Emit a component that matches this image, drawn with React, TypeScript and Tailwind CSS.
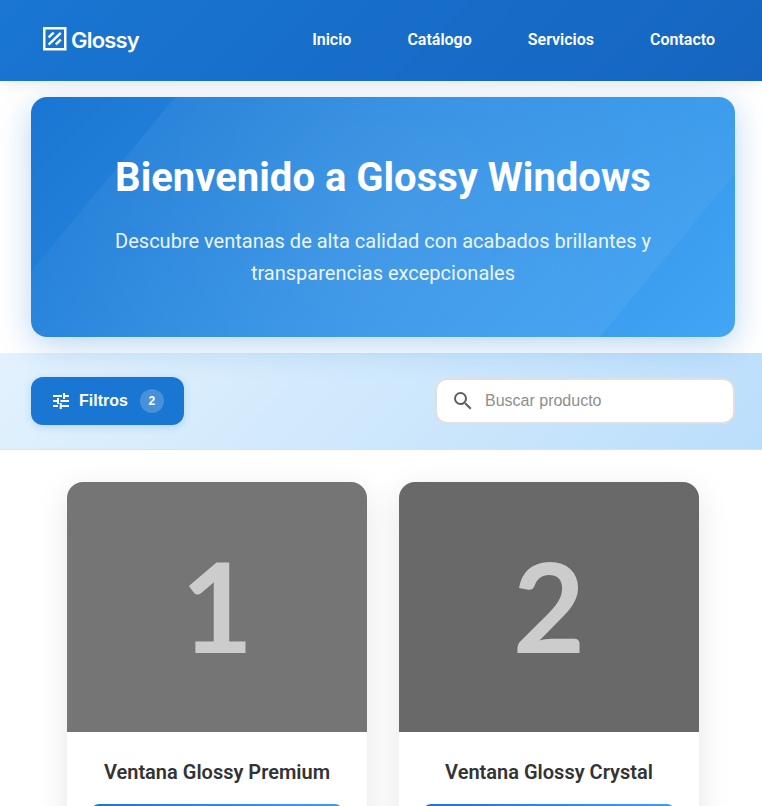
import { MdSearch } from "react-icons/md";

const links = ["Inicio", "Catálogo", "Servicios", "Contacto"];

const products = [
  { id: 1, name: "Ventana Glossy Premium", shade: "bg-[#757575]" },
  { id: 2, name: "Ventana Glossy Crystal", shade: "bg-[#696969]" },
];

function Logo() {
  return (
    <a className="flex items-center pb-[3px] text-white">
      <svg width="24" height="24" viewBox="0 0 24 24" fill="none" stroke="currentColor">
        <rect x="1.25" y="1.25" width="21" height="21" strokeWidth="2.5" />
        <path d="M5.6 10.4 10.7 5.6M5.6 17.6 17.8 5.8M12.8 17.4 17.8 12.6" strokeWidth="2.4" />
      </svg>
      <span className="ml-1 pt-[2px] font-['Inter',sans-serif] text-[22px] font-semibold leading-6 tracking-[-0.8px]">Glossy</span>
    </a>
  );
}

function TuneIcon() {
  return (
    <svg width="20" height="20" viewBox="0 0 20 20" fill="currentColor">
      <path d="M2 4h9v2H2zM12 2h2v2h4v2h-4v2h-2zM2 9h4V7h2v6H6v-2H2zM9.5 9H18v2H9.500zM2 14h5v2H2zM8.700 12h2v2H18v2h-7.300v2h-2z" />
    </svg>
  );
}

export default function App() {
  return (
    <div className="h-[806px] overflow-hidden bg-white font-['Roboto',sans-serif] text-[#333]">
      <header className="relative z-10 flex h-[81px] items-center justify-between bg-linear-[135deg,#1976d2,#1565c0] pr-[47px] pl-[43px] shadow-[0_2px_12px_rgba(0,0,0,0.1)]">
        <Logo />
        <nav className="flex gap-14 pb-[2px] text-base font-semibold text-white">
          {links.map((l) => (
            <a key={l}>{l}</a>
          ))}
        </nav>
      </header>

      <section className="relative mt-4 mr-[27px] mb-4 ml-[31px] h-60 overflow-hidden rounded-2xl bg-linear-[135deg,#1976d2,#42a5f5] px-12 pt-[57px] text-center text-white shadow-[0_8px_32px_rgba(25,118,210,0.3)]">
        <div className="absolute -top-1/2 -left-1/2 h-[200%] w-[200%] translate-x-[3px] translate-y-[2px] -rotate-[50.4deg] bg-[radial-gradient(circle,rgba(255,255,255,0.1)_0%,transparent_70%)]" />
        <h1 className="relative text-[40px] font-bold leading-[48px]">Bienvenido a Glossy Windows</h1>
        <p className="relative mx-auto mt-[23px] max-w-[600px] text-xl leading-8 opacity-90">
          Descubre ventanas de alta calidad con acabados brillantes y transparencias excepcionales
        </p>
      </section>

      <section className="flex h-[97px] items-center justify-between border-b border-[#e0e0e0] bg-linear-[135deg,#e3f2fd,#bbdefb] pr-[27px] pl-[31px] font-['Liberation_Sans',sans-serif]">
        <button className="flex h-12 w-[153px] items-center rounded-xl bg-[#1976d2] pl-5 text-base font-semibold text-white shadow-[0_2px_8px_rgba(25,118,210,0.2)]">
          <TuneIcon />
          <span className="ml-2">Filtros</span>
          <span className="ml-3 flex size-6 items-center justify-center rounded-full bg-white/20 text-xs">2</span>
        </button>
        <label className="flex h-[46px] w-[300px] items-center rounded-xl border-2 border-[#e0e0e0] bg-white pl-3.5">
          <MdSearch size={24} className="text-[#5f5f5f]" />
          <input
            className="ml-2.5 min-w-0 flex-1 bg-transparent text-base outline-none placeholder:text-[#8e8e8e]"
            placeholder="Buscar producto"
          />
        </label>
      </section>

      <main className="flex justify-center gap-8 pt-8 pl-1">
        {products.map((p) => (
          <article key={p.id} className="w-[300px] overflow-hidden rounded-2xl bg-white shadow-[0_8px_32px_rgba(0,0,0,0.1)]">
            <div className={`flex h-[250px] items-center justify-center pb-1 font-['Lato',sans-serif] text-[125px] font-bold leading-none text-[#ccc] ${p.shade}`}>
              {p.id}
            </div>
            <div className="px-6 pt-6 pb-8">
              <h3 className="text-center text-xl font-semibold leading-8">{p.name}</h3>
              <button className="mt-4 block h-11 w-full rounded-lg bg-linear-[135deg,#1976d2,#42a5f5] font-['Liberation_Sans',sans-serif] text-white" />
            </div>
          </article>
        ))}
      </main>
    </div>
  );
}
